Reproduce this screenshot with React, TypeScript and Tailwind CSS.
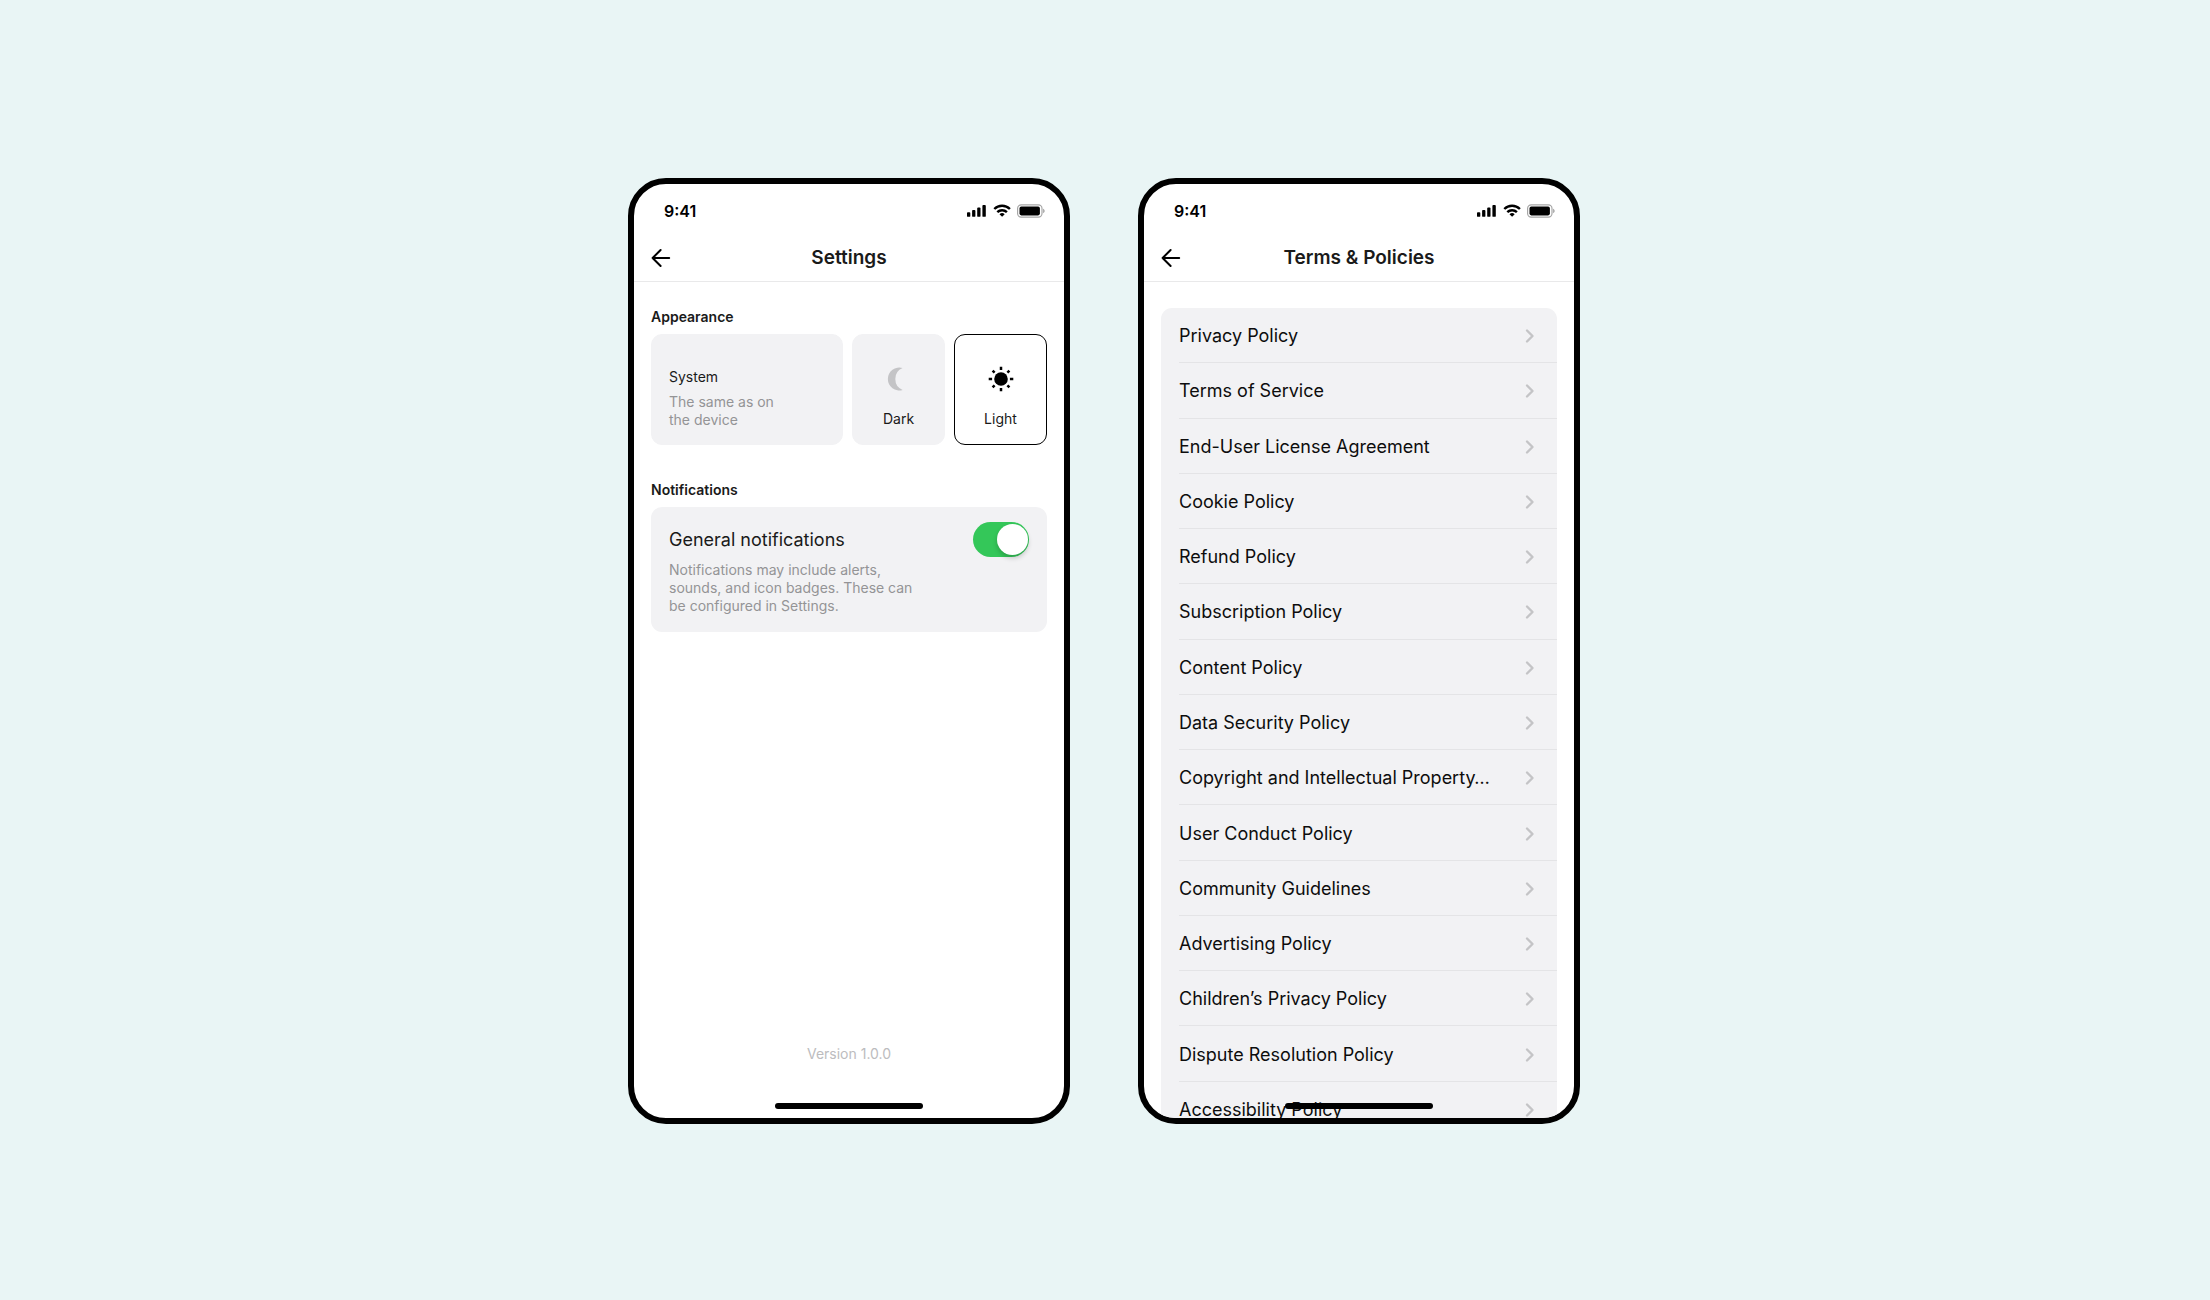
import { ReactNode, useState } from "react";

const policies = [
  "Privacy Policy",
  "Terms of Service",
  "End-User License Agreement",
  "Cookie Policy",
  "Refund Policy",
  "Subscription Policy",
  "Content Policy",
  "Data Security Policy",
  "Copyright and Intellectual Property…",
  "User Conduct Policy",
  "Community Guidelines",
  "Advertising Policy",
  "Children’s Privacy Policy",
  "Dispute Resolution Policy",
  "Accessibility Policy",
];

function StatusBar() {
  return (
    <div className="flex h-[54px] shrink-0 items-center justify-between pl-[30px] pr-[19px]">
      <span className="text-base font-semibold">9:41</span>
      <svg width="78" height="14" viewBox="0 0 78 14" fill="none" aria-hidden="true">
        {/* Signal */}
        <g fill="#000">
          <rect x="0" y="8.2" width="3.3" height="4.6" rx="0.9" />
          <rect x="5.1" y="6" width="3.3" height="6.8" rx="0.9" />
          <rect x="10.2" y="3.6" width="3.3" height="9.2" rx="0.9" />
          <rect x="15.4" y="1" width="3.4" height="11.8" rx="0.9" />
        </g>
        {/* Wi-Fi */}
        <g stroke="#000" strokeWidth="2.4">
          <path d="M27.3 5a11 11 0 0 1 15.6 0" />
          <path d="M30.3 8.2a6.8 6.8 0 0 1 9.6 0" />
        </g>
        <path d="M35.1 12.8l-2.6-2.5a3.7 3.7 0 0 1 5.2 0z" fill="#000" />
        {/* Battery */}
        <rect x="50.6" y="0.8" width="24.4" height="12.4" rx="3.6" stroke="#000" strokeOpacity="0.35" strokeWidth="1.2" />
        <rect x="52.5" y="2.6" width="20.4" height="8.8" rx="1.8" fill="#000" />
        <path d="M76.2 4.8v4.4c.9-.4 1.4-1.2 1.4-2.2s-.5-1.8-1.4-2.2z" fill="#000" fillOpacity="0.4" />
      </svg>
    </div>
  );
}

function Phone({ title, children }: { title: string; children: ReactNode }) {
  return (
    <section className="relative flex h-[946px] w-full max-w-[442px] flex-col overflow-hidden rounded-[38px] border-[6px] border-black bg-white">
      <StatusBar />
      <header className="grid h-11 shrink-0 grid-cols-[1fr_auto_1fr] items-center border-b border-[#e9e9ea] px-[17px] pb-[3px]">
        <button type="button" aria-label="Back" className="w-5">
          <svg width="20" height="20" viewBox="0 0 20 20" fill="none" stroke="#000" strokeWidth="2" strokeLinecap="round" strokeLinejoin="round">
            <path d="M18.2 10H1.6M9.6 2L1.6 10l8 8" />
          </svg>
        </button>
        <h1 className="text-[19px] font-semibold leading-6 text-[#1a1a1a]">{title}</h1>
      </header>
      {children}
      <div className="absolute bottom-[9px] left-1/2 h-1.5 w-[148px] -translate-x-1/2 rounded-full bg-black" />
    </section>
  );
}

function MoonIcon() {
  return (
    <svg width="26" height="26" viewBox="0 0 26 26" fill="#c4c4c6" aria-hidden="true">
      <path d="M16.6 2.1A11.4 11.4 0 1 0 16.6 23.9A11.8 11.8 0 0 1 16.6 2.1z" />
    </svg>
  );
}

function SunIcon() {
  return (
    <svg width="26" height="26" viewBox="0 0 26 26" fill="none" aria-hidden="true">
      <circle cx="13" cy="13" r="6.8" fill="#000" />
      <path
        d="M13 .7v3.4M13 21.9v3.4M.7 13h3.4M21.9 13h3.4M4.6 4.6l2 2M19.4 19.4l2 2M4.6 21.4l2-2M19.4 6.6l2-2"
        stroke="#000"
        strokeWidth="2.5"
      />
    </svg>
  );
}

function Settings() {
  const [theme, setTheme] = useState("light");
  const [notify, setNotify] = useState(true);

  const card =
    "flex h-[111px] cursor-pointer flex-col rounded-[11px] border border-[#f2f2f4] bg-[#f2f2f4] has-checked:border-black has-checked:bg-white";

  const radio = (value: string) => (
    <input
      type="radio"
      name="theme"
      value={value}
      checked={theme === value}
      onChange={() => setTheme(value)}
      className="sr-only"
    />
  );

  return (
    <div className="flex flex-1 flex-col px-[17px] pt-[26px] text-sm leading-[18px] text-[#1a1a1a]">
      {/* Appearance */}
      <h2 className="font-semibold">Appearance</h2>
      <div className="mt-2 grid grid-cols-[192fr_93fr_93fr] gap-[9px]">
        <label className={`${card} justify-end px-[17px] pb-[15px]`}>
          {radio("system")}
          <span>System</span>
          <span className="mt-[7px] text-[#949496]">
            The same as on
            <br />
            the device
          </span>
        </label>
        <label className={`${card} items-center justify-end gap-[18px] pb-4`}>
          {radio("dark")}
          <MoonIcon />
          <span>Dark</span>
        </label>
        <label className={`${card} items-center justify-end gap-[18px] pb-4`}>
          {radio("light")}
          <SunIcon />
          <span>Light</span>
        </label>
      </div>

      {/* Notifications */}
      <h2 className="mt-9 font-semibold">Notifications</h2>
      <div className="mt-2 rounded-[11px] bg-[#f2f2f4] px-[18px] pb-[17px] pt-[15px]">
        <div className="flex items-center justify-between">
          <label htmlFor="notify" className="text-lg">
            General notifications
          </label>
          <input
            id="notify"
            type="checkbox"
            role="switch"
            checked={notify}
            onChange={(e) => setNotify(e.target.checked)}
            className="h-[35px] w-14 cursor-pointer appearance-none rounded-full bg-[#d5d5d8] p-0.5 before:block before:size-[31px] before:rounded-full before:bg-white before:shadow-[0_3px_5px_rgba(0,0,0,0.2)] checked:bg-[#34c759] checked:before:ml-[22px]"
          />
        </div>
        <p className="mt-1 max-w-[260px] text-[#949496]">
          Notifications may include alerts, sounds, and icon badges. These can be configured in Settings.
        </p>
      </div>

      <p className="mb-[55px] mt-auto text-center text-[#bcbcbe]">Version 1.0.0</p>
    </div>
  );
}

function Policies() {
  return (
    <nav className="px-[17px] pt-[26px]">
      <ul className="grid h-[829px] auto-rows-fr rounded-[11px] bg-[#f2f2f4] pl-[18px]">
        {policies.map((name) => (
          <li key={name} className="border-b border-[#e4e4e6] last:border-b-0">
            <a href="#" className="flex h-full items-center justify-between pr-[22px] pt-0.5 text-lg text-[#0d0d0d]">
              {name}
              <svg width="10" height="16" viewBox="0 0 10 16" fill="none" stroke="#c4c4c6" strokeWidth="2.4" strokeLinecap="round" strokeLinejoin="round" aria-hidden="true">
                <path d="M2 2.5L7.5 8L2 13.5" />
              </svg>
            </a>
          </li>
        ))}
      </ul>
    </nav>
  );
}

export default function App() {
  return (
    <main className="flex min-h-screen flex-wrap items-center justify-center gap-[68px] bg-[#e9f5f5] pr-0.5 pt-0.5 font-['Inter',sans-serif] text-black">
      <Phone title="Settings">
        <Settings />
      </Phone>
      <Phone title="Terms & Policies">
        <Policies />
      </Phone>
    </main>
  );
}
